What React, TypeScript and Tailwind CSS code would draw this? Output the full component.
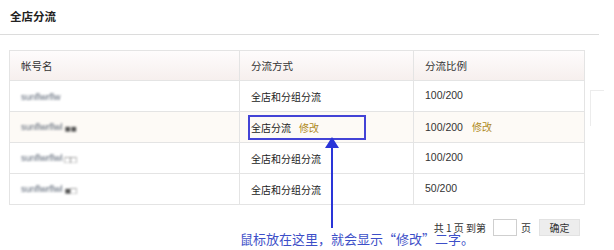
import React from "react";

interface Row {
  name: string;
  suffix: string;
  mode: string;
  ratio: string;
  hover?: boolean;
}

const rows: Row[] = [
  { name: "sunflwrflw", suffix: "", mode: "全店和分组分流", ratio: "100/200" },
  { name: "sunflwrflwl", suffix: "■■", mode: "全店分流", ratio: "100/200", hover: true },
  { name: "sunflwrflwl", suffix: "□□", mode: "全店和分组分流", ratio: "100/200" },
  { name: "sunflwrflwl", suffix: "■□", mode: "全店和分组分流", ratio: "50/200" },
];

const cjk = "font-['Noto_Sans_CJK_SC','Liberation_Sans',sans-serif]";

export default function App() {
  return (
    <div className={`relative w-[614px] h-[250px] overflow-hidden bg-white text-[#333] ${cjk}`}>
      {/* Title */}
      <div className="w-[599px] h-[35px] border-b border-[#dcdcdc] pl-[10px] pt-[7px] text-[11.5px] font-bold text-[#222] leading-[18px]">
        全店分流
      </div>

      {/* Table */}
      <div className="ml-[9px] mt-[15px] w-[576px]">
        <table className="w-full border-collapse border border-[#e4e4e4] text-[10px]">
          <thead>
            <tr className="h-[30px] bg-gradient-to-b from-[#fefcfc] to-[#f6efed]">
              <th className="w-[230px] border border-[#e4e4e4] pl-[11px] text-left font-normal text-[10.5px] text-[#333]">帐号名</th>
              <th className="w-[174px] border border-[#e4e4e4] pl-[11px] text-left font-normal text-[10.5px] text-[#333]">分流方式</th>
              <th className="border border-[#e4e4e4] pl-[11px] text-left font-normal text-[10.5px] text-[#333]">分流比例</th>
            </tr>
          </thead>
          <tbody>
            {rows.map((r, i) => (
              <tr key={i} className={`h-[31px] ${r.hover ? "bg-[#fdfaf6]" : "bg-white"}`}>
                <td className="border border-[#e4e4e4] pl-[11px]">
                  <span className="inline-flex items-center gap-[2px] blur-[1px] font-['Liberation_Sans',sans-serif] text-[9px] text-[#556070]">
                    {r.name}
                    {r.suffix && <span className="text-[10px] text-[#555]">{r.suffix}</span>}
                  </span>
                </td>
                <td className="border border-[#e4e4e4] pl-[11px] text-[#222]">
                  {r.mode}
                  {r.hover && <span className="ml-[8px] text-[#b08a1e]">修改</span>}
                </td>
                <td className="border border-[#e4e4e4] pl-[11px] font-['Liberation_Sans',sans-serif] text-[10.5px] text-[#333]">
                  {r.ratio}
                  {r.hover && <span className={`ml-[9px] text-[10px] text-[#b08a1e] ${cjk}`}>修改</span>}
                </td>
              </tr>
            ))}
          </tbody>
        </table>
      </div>

      {/* Pagination */}
      <div className="mt-[14px] w-[580px] flex justify-end items-center text-[10px] leading-[11px] text-[#333]">
        <span>共 1 页 到第</span>
        <input className="ml-[7px] w-[24px] h-[17px] border border-[#cfcfcf] bg-white" />
        <span className="ml-[4px]">页</span>
        <button className="ml-[8px] w-[41px] h-[17px] bg-[#ededed] border border-[#e2e2e2] text-[10px] text-[#333]">确定</button>
      </div>

      {/* Annotation overlay */}
      <div className="absolute left-[248px] top-[115px] w-[118px] h-[25px] border-2 border-[#4343d6]" />
      <div className="absolute left-[331px] top-[146px] w-[2px] h-[82px] bg-[#2a35d8]" />
      <svg className="absolute left-[325px] top-[137px]" width="14" height="11" viewBox="0 0 14 11">
        <polygon points="7,0 14,11 0,11" fill="#2a35d8" />
      </svg>
      <div className="absolute left-[240px] top-[232px] text-[13px] leading-[14px] text-[#3d4fc8]">
        鼠标放在这里，就会显示“修改”二字。
      </div>

      {/* faint edge of a side panel */}
      <div className="absolute left-[590px] top-[90px] w-[14px] h-[36px] border-l border-t border-[#ececec]" />
    </div>
  );
}
